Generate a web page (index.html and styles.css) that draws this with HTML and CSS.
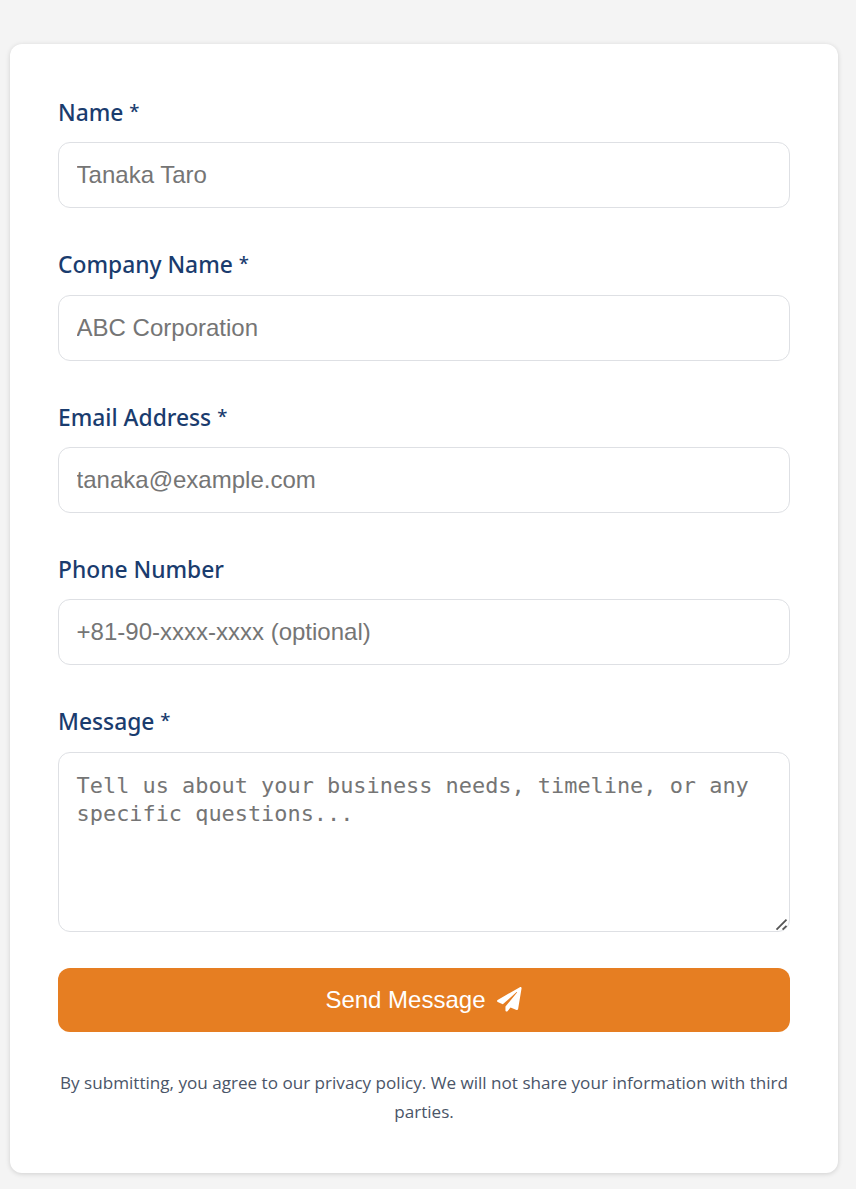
FILE: index.html
```html
<!DOCTYPE html>
<html lang="en">
<head>
<meta charset="utf-8">
<title>Contact</title>
<link rel="stylesheet" href="styles.css">
</head>
<body>
<form class="card">
  <div class="field">
    <label class="label" for="name">Name <span class="req">*</span></label>
    <input class="input" id="name" type="text" placeholder="Tanaka Taro">
  </div>
  <div class="field">
    <label class="label" for="company">Company Name <span class="req">*</span></label>
    <input class="input" id="company" type="text" placeholder="ABC Corporation">
  </div>
  <div class="field">
    <label class="label" for="email">Email Address <span class="req">*</span></label>
    <input class="input" id="email" type="email" placeholder="tanaka@example.com">
  </div>
  <div class="field">
    <label class="label" for="phone">Phone Number</label>
    <input class="input" id="phone" type="tel" placeholder="+81-90-xxxx-xxxx (optional)">
  </div>
  <div class="field">
    <label class="label" for="message">Message <span class="req">*</span></label>
    <div class="area-wrap">
      <textarea class="input area" id="message" placeholder="Tell us about your business needs, timeline, or any specific questions..."></textarea>
      <svg class="grip" viewBox="0 0 14 14" aria-hidden="true"><path d="M1.500 11.700 11.500 1.700M7.600 11.700 11.500 7.800"/></svg>
    </div>
  </div>
  <button class="send" type="button">
    <span>Send Message</span>
    <svg class="plane" viewBox="0 0 512 512" aria-hidden="true"><path d="M476 3.2L12.500 270.600c-18.100 10.400-15.800 35.600 2.200 43.200L121 358.400l287.300-253.200c5.500-4.900 13.300 2.600 8.600 8.300L176 407v80.500c0 23.600 28.500 32.900 42.500 15.800L282 426l124.600 52.200c14.200 6 30.400-2.900 33-18.200l72-432C515 7.800 493.300-6.800 476 3.200z"/></svg>
  </button>
  <p class="note">By submitting, you agree to our privacy policy. We will not share your information with third parties.</p>
</form>
</body>
</html>
```
FILE: styles.css
```css
* { box-sizing: border-box; }
body {
  margin: 0;
  padding: 44px 18px 15px 10px;
  background: #f4f4f4;
  font-family: "Open Sans", "Noto Sans", sans-serif;
  line-height: 1.6;
}
.card {
  padding: 48px 48px 46.8px;
  border-radius: 12px;
  background: #fff;
  box-shadow: 0 1px 5px rgba(0, 0, 0, 0.15);
}
.field { margin-bottom: 36px; }
.label {
  display: block;
  padding-top: 2px;
  margin-bottom: 10px;
  color: #1a3c6e;
  font-family: "Noto Sans", sans-serif;
  font-size: 22.8px;
  font-weight: 500;
  line-height: 38.35px;
}
.req {
  font-size: 18.5px;
  line-height: 1;
  vertical-align: 3px;
}
.input {
  display: block;
  width: 100%;
  height: 66px;
  padding: 18px 17.6px;
  border: 1px solid #dee0e4;
  border-radius: 12px;
  background: #fff;
  font-family: "Liberation Sans", Arial, sans-serif;
  font-size: 24px;
}
.input::placeholder { color: #757575; opacity: 1; }
.area-wrap { position: relative; }
.area {
  height: 180px;
  padding-top: 19px;
  overflow: hidden;
  resize: none;
  font-family: "DejaVu Sans Mono", monospace;
  font-size: 21.9px;
  line-height: 28px;
}
.grip {
  position: absolute;
  right: 1px;
  bottom: 0;
  width: 14px;
  height: 14px;
  fill: none;
  stroke: #555;
  stroke-width: 1.8;
}
.send {
  display: flex;
  align-items: center;
  justify-content: center;
  gap: 11.5px;
  width: 100%;
  height: 64px;
  padding: 0 7px 0 6px;
  border: 0;
  border-radius: 12px;
  background: #e67e22;
  color: #fff;
  font-family: "Liberation Sans", Arial, sans-serif;
  font-size: 24px;
}
.plane { width: 24.6px; height: 24.6px; fill: #fff; }
.note {
  padding-top: 1.1px;
  margin: 36px -1px 0;
  color: #4a5568;
  font-size: 17.1px;
  line-height: 28.8px;
  text-align: center;
}
```
